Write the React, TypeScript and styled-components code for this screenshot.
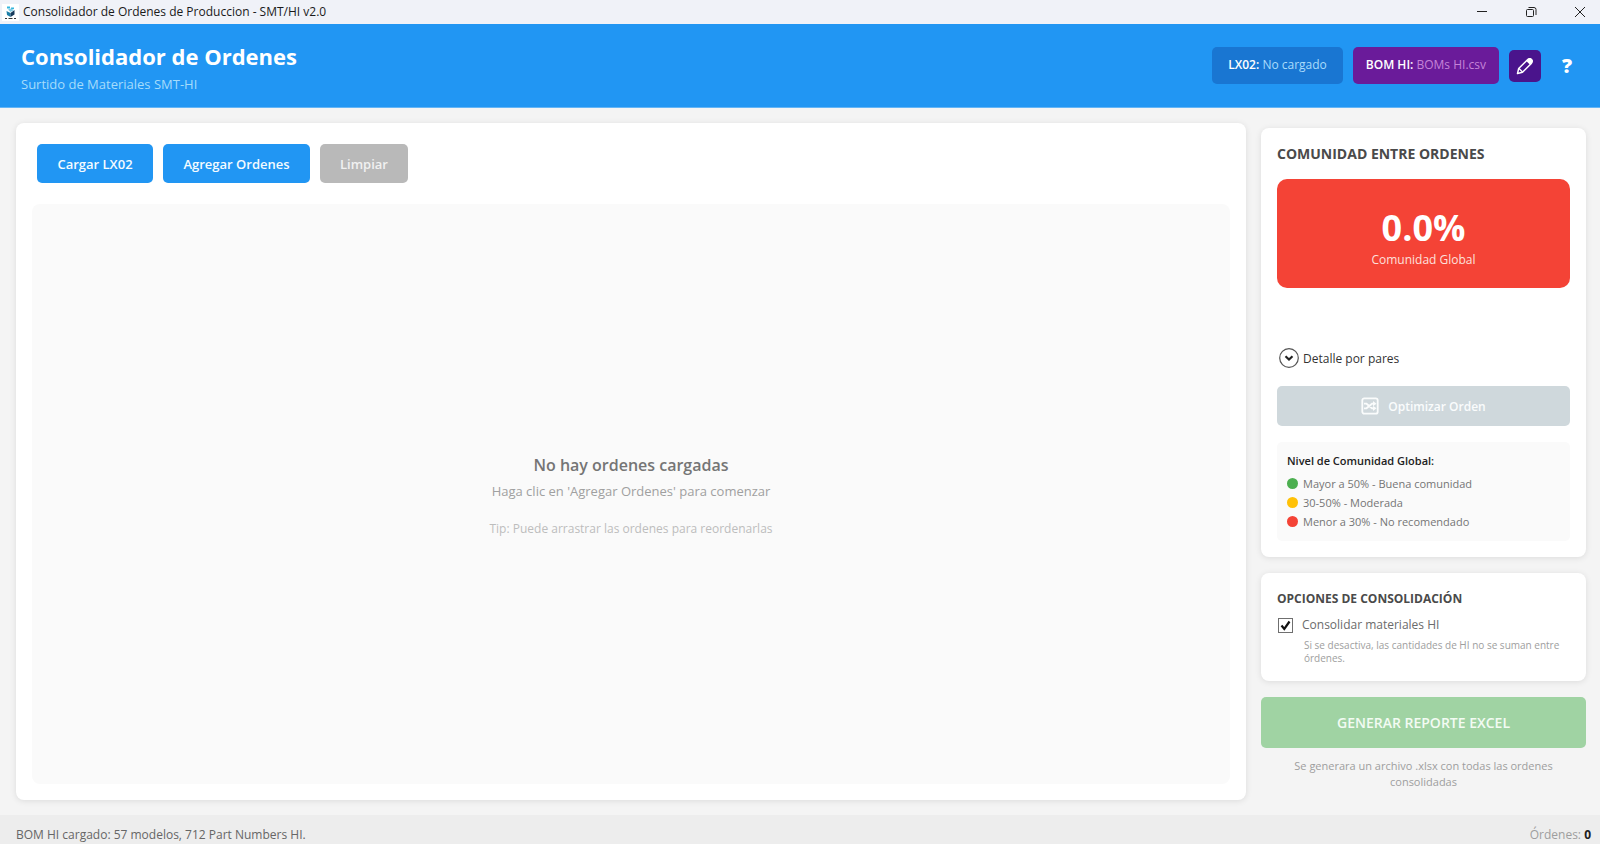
import React, { useState } from "react";
import styled, { createGlobalStyle } from "styled-components";

const GlobalStyle = createGlobalStyle`
  * { box-sizing: border-box; }
  body {
    margin: 0;
    background: #f4f4f4;
    font-family: "Open Sans", "Noto Sans", sans-serif;
    color: #212121;
  }
  button { font-family: inherit; border: 0; cursor: pointer; }
  h1, h2, p, ul { margin: 0; padding: 0; }
`;

const Window = styled.div`
  min-height: 100vh;
  display: flex;
  flex-direction: column;
`;

const TitleBar = styled.div`
  height: 24px;
  display: flex;
  align-items: center;
  justify-content: space-between;
  background: #f0f2f8;
  padding-left: 2px;
`;

const WindowTitle = styled.div`
  display: flex;
  align-items: center;
  gap: 4px;
  font-size: 12px;
  line-height: 16px;
  color: #1a1a1a;
`;

const WindowControls = styled.div`
  display: flex;
  gap: 9px;
`;

const WindowButton = styled.button`
  width: 40px;
  height: 24px;
  padding: 0;
  background: transparent;
  display: grid;
  place-items: center;
`;

const Header = styled.header`
  display: flex;
  align-items: center;
  justify-content: space-between;
  height: 84px;
  padding: 0 17px 0 21px;
  background: #2196f3;
  border-bottom: 1px solid #64b5f6;
`;

const HeaderText = styled.div`
  padding-top: 5px;
`;

const AppTitle = styled.h1`
  font-size: 22px;
  line-height: 32px;
  font-weight: 700;
  color: #fff;
`;

const AppSubtitle = styled.p`
  font-size: 13px;
  line-height: 24px;
  color: #a5dcfb;
`;

const HeaderTools = styled.div`
  display: flex;
  align-items: center;
  gap: 10px;
`;

const FileBadge = styled.div<{ $bg: string; $ink: string; $pad: number }>`
  height: 37px;
  padding: 0 ${(p) => p.$pad}px;
  border-radius: 5px;
  background: ${(p) => p.$bg};
  color: ${(p) => p.$ink};
  font-size: 12px;
  line-height: 35px;
  white-space: nowrap;
  strong { color: #fff; font-weight: 600; }
`;

const IconButton = styled.button<{ $bg?: string }>`
  width: 32px;
  height: 32px;
  padding: 0;
  border-radius: 5px;
  background: ${(p) => p.$bg ?? "transparent"};
  color: #fff;
  display: grid;
  place-items: center;
  font-size: 20px;
  font-weight: 800;
`;

const Main = styled.main`
  flex: 1;
  display: flex;
  align-items: stretch;
  gap: 15px;
  padding: 15px 14px 15px 16px;
`;

const Card = styled.section`
  background: #fff;
  border-radius: 8px;
  box-shadow: 0 1px 6px rgba(0, 0, 0, 0.1);
`;

const OrdersCard = styled(Card)`
  flex: 1;
  min-width: 0;
  padding: 21px 16px 16px;
  display: flex;
  flex-direction: column;
  gap: 21px;
`;

const Toolbar = styled.div`
  display: flex;
  gap: 10px;
  padding-left: 5px;
`;

const ToolButton = styled.button<{ $width: number }>`
  width: ${(p) => p.$width}px;
  height: 39px;
  padding: 0;
  border-radius: 5px;
  background: #2196f3;
  color: #f4fbff;
  font-size: 13px;
  font-weight: 600;
  &:disabled { background: #b9b9b9; color: #f1f1f1; }
`;

const EmptyList = styled.div`
  flex: 1;
  border-radius: 8px;
  background: #fafafa;
  padding-top: 4px;
  display: flex;
  flex-direction: column;
  align-items: center;
  justify-content: center;
  text-align: center;
`;

const EmptyTitle = styled.h2`
  font-size: 16px;
  line-height: 26px;
  font-weight: 600;
  color: #757575;
`;

const EmptyHint = styled.p`
  font-size: 13px;
  line-height: 26px;
  color: #a0a0a0;
`;

const EmptyTip = styled.p`
  padding-top: 13px;
  font-size: 12px;
  line-height: 24px;
  color: #bdbdbd;
`;

const Sidebar = styled.aside`
  width: 325px;
  flex: none;
  padding-top: 5px;
  display: flex;
  flex-direction: column;
  gap: 16px;
`;

const SideCard = styled(Card)`
  padding: 16px;
`;

const SideTitle = styled.h2<{ $size: number }>`
  font-size: ${(p) => p.$size}px;
  line-height: 20px;
  font-weight: 700;
  color: #4a4a4a;
`;

const ScoreBox = styled.div`
  margin-top: 15px;
  height: 109px;
  border-radius: 10px;
  background: #f44336;
  color: #fff;
  text-align: center;
  padding-top: 26px;
`;

const ScoreValue = styled.div`
  font-size: 36px;
  line-height: 45px;
  font-weight: 700;
`;

const ScoreLabel = styled.div`
  font-size: 12px;
  line-height: 20px;
  color: #fde0dd;
`;

const Expander = styled.button`
  margin-top: 59px;
  padding: 0 2px;
  height: 22px;
  display: flex;
  align-items: center;
  gap: 4px;
  background: transparent;
  color: #333;
  font-size: 12px;
`;

const OptimizeButton = styled.button`
  margin-top: 17px;
  width: 100%;
  height: 40px;
  border-radius: 5px;
  background: #cfd8dc;
  color: #fafcfc;
  display: flex;
  align-items: center;
  justify-content: center;
  gap: 9px;
  font-size: 12px;
  font-weight: 600;
`;

const Legend = styled.div`
  margin-top: 16px;
  padding: 9px 10px 10px;
  border-radius: 5px;
  background: #fafafa;
`;

const LegendTitle = styled.p`
  font-size: 11px;
  line-height: 20px;
  font-weight: 600;
  padding-bottom: 3px;
`;

const LegendList = styled.ul`
  list-style: none;
`;

const LegendItem = styled.li<{ $dot: string }>`
  display: flex;
  align-items: center;
  gap: 5px;
  font-size: 11px;
  line-height: 19px;
  color: #757575;
  &::before {
    content: "";
    width: 11px;
    height: 11px;
    border-radius: 50%;
    background: ${(p) => p.$dot};
  }
`;

const CheckLabel = styled.label`
  display: flex;
  align-items: center;
  gap: 9px;
  margin-top: 6px;
  padding-left: 1px;
  font-size: 12px;
  line-height: 20px;
  color: #6b6b6b;
`;

const CheckFrame = styled.span`
  display: grid;
  > * { grid-area: 1 / 1; }
  svg { pointer-events: none; }
`;

const CheckInput = styled.input`
  appearance: none;
  width: 15px;
  height: 15px;
  margin: 0;
  border: 1px solid #6f6f6f;
  background: #fff;
`;

const CheckHelp = styled.p`
  padding: 4px 0 0 27px;
  font-size: 10px;
  line-height: 13px;
  color: #9e9e9e;
`;

const GenerateButton = styled.button`
  height: 51px;
  border-radius: 5px;
  background: #a0d3a3;
  color: #f3fbf3;
  font-size: 14px;
  font-weight: 600;
`;

const GenerateNote = styled.p`
  margin-top: -6px;
  padding: 0 24px;
  text-align: center;
  font-size: 11px;
  line-height: 16px;
  color: #9e9e9e;
`;

const StatusBar = styled.footer`
  display: flex;
  justify-content: space-between;
  height: 29px;
  padding: 10px 9px 0 16px;
  background: #ededed;
  font-size: 12px;
  line-height: 19px;
  color: #666;
`;

const OrderCount = styled.span`
  color: #9e9e9e;
  strong { color: #212121; font-weight: 700; }
`;

const AppLogo = () => (
  <svg width="17" height="17" viewBox="0 0 17 17" aria-hidden="true">
    <rect width="17" height="17" fill="#fff" />
    <path d="M5 2.5h3v2H5zM9 3.5h3v1.5H9z" fill="#35b5dc" />
    <path d="M4.5 7l4 2v4l-3.500-2z" fill="#1d7fa8" />
    <path d="M8.500 9l4-3v4.500l-4 2.500z" fill="#163a5c" />
    <path d="M6 5.500l3-1 3 1.500-3.500 2z" fill="#7fcbe2" />
    <path d="M3 14.500h2M6.500 14.500h4M12 14.500h2" stroke="#333" strokeWidth="1" />
  </svg>
);

const PencilIcon = () => (
  <svg width="18" height="18" viewBox="0 0 18 18" fill="none" aria-hidden="true">
    <path d="M1.500 16.500l1.200-5L11.500 2.700a2.500 2.500 0 0 1 3.800 3.800L6.500 15.300z" stroke="#fff" strokeWidth="1.500" strokeLinejoin="round" />
    <path d="M10.300 4L12.200 2a2.500 2.500 0 0 1 3.800 3.800l-2 1.900z" fill="#fff" />
    <path d="M3 11.500l3.500 3.500" stroke="#fff" strokeWidth="1.200" />
  </svg>
);

const ShuffleIcon = () => (
  <svg width="18" height="18" viewBox="0 0 18 18" fill="none" stroke="#fafcfc" strokeWidth="1.800" aria-hidden="true">
    <rect x="1.300" y="1.300" width="15.400" height="15.400" rx="2" />
    <path d="M3 6.700h2.500l5.500 4.600h2M3 11.300h2.500L11 6.700h2" />
    <path d="M12 4l3.500 2.700L12 9.200zM12 8.800l3.500 2.500L12 14z" fill="#fafcfc" stroke="none" />
  </svg>
);

const ChevronCircle = () => (
  <svg width="20" height="20" viewBox="0 0 20 20" fill="none" aria-hidden="true">
    <circle cx="10" cy="10" r="9.300" stroke="#555" strokeWidth="1.200" />
    <path d="M6.500 8.300l3.500 3.200 3.500-3.200" stroke="#222" strokeWidth="2.200" />
  </svg>
);

export default function App() {
  const [merge, setMerge] = useState(true);
  const [open, setOpen] = useState(false);
  return (
    <Window>
      <GlobalStyle />
      <TitleBar>
        <WindowTitle>
          <AppLogo />
          Consolidador de Ordenes de Produccion - SMT/HI v2.0
        </WindowTitle>
        <WindowControls>
          <WindowButton aria-label="Minimizar">
            <svg width="12" height="12" stroke="#222" fill="none"><path d="M1 5.500h10" /></svg>
          </WindowButton>
          <WindowButton aria-label="Restaurar">
            <svg width="12" height="12" stroke="#222" fill="none">
              <rect x="1.500" y="3.500" width="7" height="7" rx="1" />
              <path d="M3.500 1.500h5.500a2 2 0 0 1 2 2v5.500" />
            </svg>
          </WindowButton>
          <WindowButton aria-label="Cerrar">
            <svg width="12" height="12" stroke="#222" fill="none"><path d="M1 1l10 10M11 1L1 11" /></svg>
          </WindowButton>
        </WindowControls>
      </TitleBar>

      <Header>
        <HeaderText>
          <AppTitle>Consolidador de Ordenes</AppTitle>
          <AppSubtitle>Surtido de Materiales SMT-HI</AppSubtitle>
        </HeaderText>
        <HeaderTools>
          <FileBadge $bg="#1976d2" $ink="#a9dcfb" $pad={16}>
            <strong>LX02:</strong> No cargado
          </FileBadge>
          <FileBadge $bg="#6a1b9a" $ink="#c583d8" $pad={13}>
            <strong>BOM HI:</strong> BOMs HI.csv
          </FileBadge>
          <IconButton $bg="#4a148c" aria-label="Editar BOM"><PencilIcon /></IconButton>
          <IconButton aria-label="Ayuda">?</IconButton>
        </HeaderTools>
      </Header>

      <Main>
        <OrdersCard>
          <Toolbar>
            <ToolButton $width={116}>Cargar LX02</ToolButton>
            <ToolButton $width={147}>Agregar Ordenes</ToolButton>
            <ToolButton $width={88} disabled>Limpiar</ToolButton>
          </Toolbar>
          <EmptyList>
            <EmptyTitle>No hay ordenes cargadas</EmptyTitle>
            <EmptyHint>Haga clic en 'Agregar Ordenes' para comenzar</EmptyHint>
            <EmptyTip>Tip: Puede arrastrar las ordenes para reordenarlas</EmptyTip>
          </EmptyList>
        </OrdersCard>

        <Sidebar>
          <SideCard>
            <SideTitle $size={14}>COMUNIDAD ENTRE ORDENES</SideTitle>
            <ScoreBox>
              <ScoreValue>0.0%</ScoreValue>
              <ScoreLabel>Comunidad Global</ScoreLabel>
            </ScoreBox>
            <Expander aria-expanded={open} onClick={() => setOpen(!open)}>
              <ChevronCircle />
              Detalle por pares
            </Expander>
            <OptimizeButton disabled>
              <ShuffleIcon />
              Optimizar Orden
            </OptimizeButton>
            <Legend>
              <LegendTitle>Nivel de Comunidad Global:</LegendTitle>
              <LegendList>
                <LegendItem $dot="#4caf50">Mayor a 50% - Buena comunidad</LegendItem>
                <LegendItem $dot="#ffc107">30-50% - Moderada</LegendItem>
                <LegendItem $dot="#f44336">Menor a 30% - No recomendado</LegendItem>
              </LegendList>
            </Legend>
          </SideCard>

          <SideCard>
            <SideTitle $size={12}>OPCIONES DE CONSOLIDACIÓN</SideTitle>
            <CheckLabel>
              <CheckFrame>
                <CheckInput type="checkbox" checked={merge} onChange={() => setMerge(!merge)} />
                {merge && (
                  <svg width="15" height="15" viewBox="0 0 15 15" fill="none" aria-hidden="true">
                    <path d="M3.500 7.500l2.800 3.500L11.500 3.500" stroke="#111" strokeWidth="2.200" />
                  </svg>
                )}
              </CheckFrame>
              Consolidar materiales HI
            </CheckLabel>
            <CheckHelp>Si se desactiva, las cantidades de HI no se suman entre órdenes.</CheckHelp>
          </SideCard>

          <GenerateButton disabled>GENERAR REPORTE EXCEL</GenerateButton>
          <GenerateNote>Se generara un archivo .xlsx con todas las ordenes consolidadas</GenerateNote>
        </Sidebar>
      </Main>

      <StatusBar>
        <span>BOM HI cargado: 57 modelos, 712 Part Numbers HI.</span>
        <OrderCount>Órdenes: <strong>0</strong></OrderCount>
      </StatusBar>
    </Window>
  );
}
